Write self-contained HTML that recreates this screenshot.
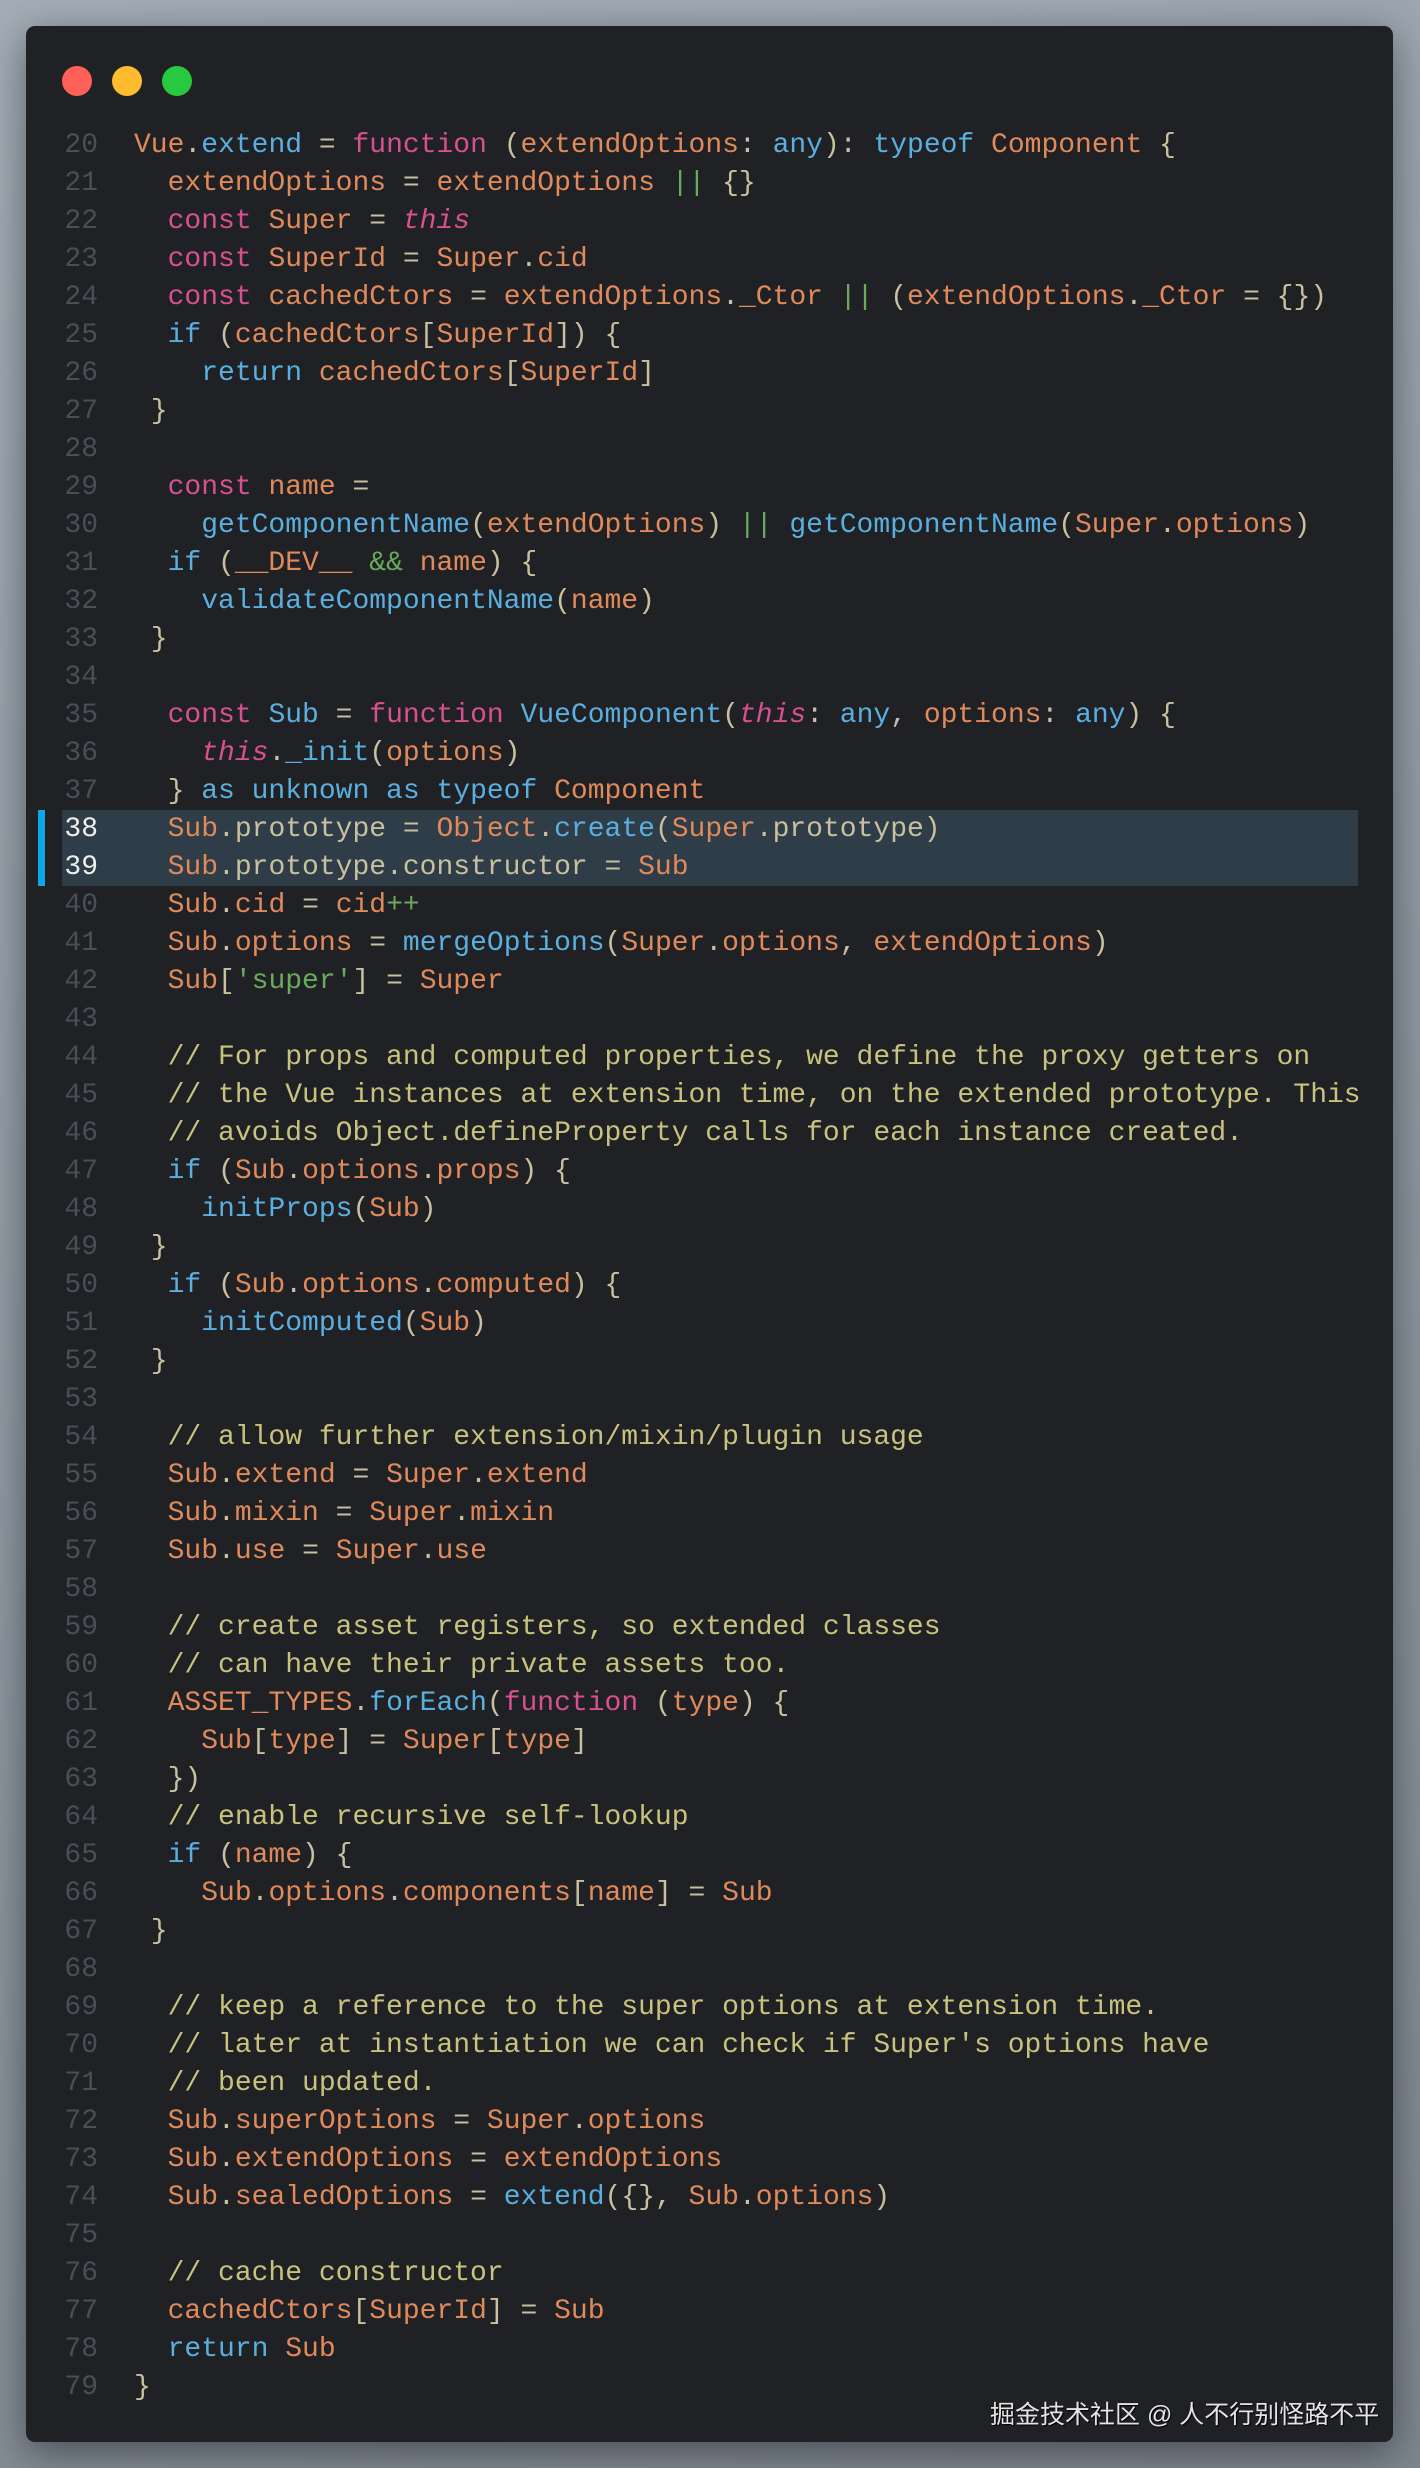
<!DOCTYPE html>
<html><head><meta charset="utf-8"><style>
html,body{margin:0;padding:0}
body{width:1420px;height:2468px;background:linear-gradient(160deg,#a3adb7 0%,#8f99a3 50%,#7d868e 100%);position:relative;overflow:hidden}
.win{position:absolute;left:26px;top:26px;width:1367px;height:2416px;background:#1f2125;border-radius:9px;box-shadow:0 10px 40px rgba(0,0,0,.45)}
.dot{position:absolute;top:40px;width:30px;height:30px;border-radius:50%}
.hl{position:absolute;left:62px;top:810px;width:1296px;height:76px;background:#2e3d47}
.bar{position:absolute;left:38px;top:810px;width:7px;height:76px;background:#0ea5e9}
pre{margin:0;position:absolute;top:127px;font-family:"Liberation Mono",monospace;font-size:28px;line-height:38px;letter-spacing:0}
.ln{left:64px;color:#4a4e55;text-align:right;width:34px}
.ln b{color:#f0f0f0;font-weight:normal}
.code{left:134px;color:#c8c0a0}
.o{color:#e08a5c}.k{color:#d9508f}.b{color:#5aafdf}.g{color:#6aaa5a}.c{color:#c9c27f}.i{color:#d9508f;font-style:italic}.p{color:#c8c0a0}
.wm{position:absolute;left:990px;top:2395px;font-family:"Liberation Sans","Noto Sans CJK SC",sans-serif;font-size:25px;color:#e4e4e4;text-shadow:1px 1px 1px #000;white-space:nowrap}
</style></head><body>
<div class="win">
<div class="dot" style="left:36px;background:#fe5f57"></div>
<div class="dot" style="left:86px;background:#febc2e"></div>
<div class="dot" style="left:136px;background:#28c840"></div>
</div>
<div class="hl"></div><div class="bar"></div>
<pre class="ln">20
21
22
23
24
25
26
27
28
29
30
31
32
33
34
35
36
37
<b>38</b>
<b>39</b>
40
41
42
43
44
45
46
47
48
49
50
51
52
53
54
55
56
57
58
59
60
61
62
63
64
65
66
67
68
69
70
71
72
73
74
75
76
77
78
79</pre>
<pre class="code"><span class="o">Vue</span>.<span class="b">extend</span> = <span class="k">function</span> (<span class="o">extendOptions</span>: <span class="b">any</span>): <span class="b">typeof</span> <span class="o">Component</span> {
  <span class="o">extendOptions</span> = <span class="o">extendOptions</span> <span class="g">||</span> {}
  <span class="k">const</span> <span class="o">Super</span> = <span class="i">this</span>
  <span class="k">const</span> <span class="o">SuperId</span> = <span class="o">Super</span>.<span class="o">cid</span>
  <span class="k">const</span> <span class="o">cachedCtors</span> = <span class="o">extendOptions</span>.<span class="o">_Ctor</span> <span class="g">||</span> (<span class="o">extendOptions</span>.<span class="o">_Ctor</span> = {})
  <span class="b">if</span> (<span class="o">cachedCtors</span>[<span class="o">SuperId</span>]) {
    <span class="b">return</span> <span class="o">cachedCtors</span>[<span class="o">SuperId</span>]
 }

  <span class="k">const</span> <span class="o">name</span> =
    <span class="b">getComponentName</span>(<span class="o">extendOptions</span>) <span class="g">||</span> <span class="b">getComponentName</span>(<span class="o">Super</span>.<span class="o">options</span>)
  <span class="b">if</span> (<span class="o">__DEV__</span> <span class="g">&amp;&amp;</span> <span class="o">name</span>) {
    <span class="b">validateComponentName</span>(<span class="o">name</span>)
 }

  <span class="k">const</span> <span class="b">Sub</span> = <span class="k">function</span> <span class="b">VueComponent</span>(<span class="i">this</span>: <span class="b">any</span>, <span class="o">options</span>: <span class="b">any</span>) {
    <span class="i">this</span>.<span class="b">_init</span>(<span class="o">options</span>)
  } <span class="b">as unknown as typeof</span> <span class="o">Component</span>
  <span class="o">Sub</span>.prototype = <span class="o">Object</span>.<span class="b">create</span>(<span class="o">Super</span>.prototype)
  <span class="o">Sub</span>.prototype.constructor = <span class="o">Sub</span>
  <span class="o">Sub</span>.<span class="o">cid</span> = <span class="o">cid</span><span class="g">++</span>
  <span class="o">Sub</span>.<span class="o">options</span> = <span class="b">mergeOptions</span>(<span class="o">Super</span>.<span class="o">options</span>, <span class="o">extendOptions</span>)
  <span class="o">Sub</span>[<span class="g">'super'</span>] = <span class="o">Super</span>

  <span class="c">// For props and computed properties, we define the proxy getters on</span>
  <span class="c">// the Vue instances at extension time, on the extended prototype. This</span>
  <span class="c">// avoids Object.defineProperty calls for each instance created.</span>
  <span class="b">if</span> (<span class="o">Sub</span>.<span class="o">options</span>.<span class="o">props</span>) {
    <span class="b">initProps</span>(<span class="o">Sub</span>)
 }
  <span class="b">if</span> (<span class="o">Sub</span>.<span class="o">options</span>.<span class="o">computed</span>) {
    <span class="b">initComputed</span>(<span class="o">Sub</span>)
 }

  <span class="c">// allow further extension/mixin/plugin usage</span>
  <span class="o">Sub</span>.<span class="o">extend</span> = <span class="o">Super</span>.<span class="o">extend</span>
  <span class="o">Sub</span>.<span class="o">mixin</span> = <span class="o">Super</span>.<span class="o">mixin</span>
  <span class="o">Sub</span>.<span class="o">use</span> = <span class="o">Super</span>.<span class="o">use</span>

  <span class="c">// create asset registers, so extended classes</span>
  <span class="c">// can have their private assets too.</span>
  <span class="o">ASSET_TYPES</span>.<span class="b">forEach</span>(<span class="k">function</span> (<span class="o">type</span>) {
    <span class="o">Sub</span>[<span class="o">type</span>] = <span class="o">Super</span>[<span class="o">type</span>]
  })
  <span class="c">// enable recursive self-lookup</span>
  <span class="b">if</span> (<span class="o">name</span>) {
    <span class="o">Sub</span>.<span class="o">options</span>.<span class="o">components</span>[<span class="o">name</span>] = <span class="o">Sub</span>
 }

  <span class="c">// keep a reference to the super options at extension time.</span>
  <span class="c">// later at instantiation we can check if Super's options have</span>
  <span class="c">// been updated.</span>
  <span class="o">Sub</span>.<span class="o">superOptions</span> = <span class="o">Super</span>.<span class="o">options</span>
  <span class="o">Sub</span>.<span class="o">extendOptions</span> = <span class="o">extendOptions</span>
  <span class="o">Sub</span>.<span class="o">sealedOptions</span> = <span class="b">extend</span>({}, <span class="o">Sub</span>.<span class="o">options</span>)

  <span class="c">// cache constructor</span>
  <span class="o">cachedCtors</span>[<span class="o">SuperId</span>] = <span class="o">Sub</span>
  <span class="b">return</span> <span class="o">Sub</span>
}</pre>
<div class="wm">掘金技术社区 @ 人不行别怪路不平</div>
</body></html>
